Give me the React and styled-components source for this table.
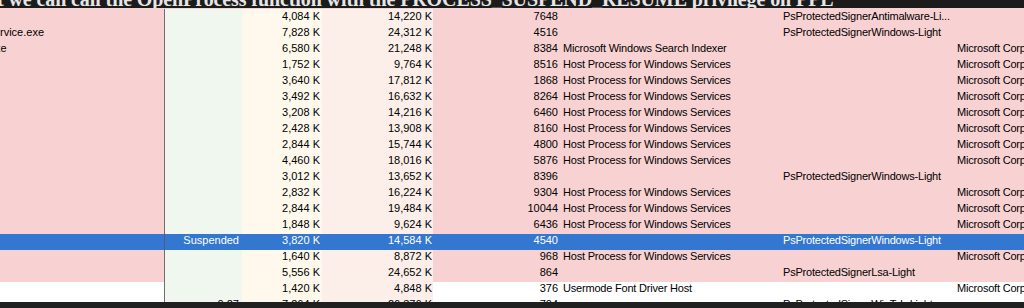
import React from "react";
import styled, { createGlobalStyle, css } from "styled-components";

const GlobalStyle = createGlobalStyle`
    html, body {
        margin: 0;
        padding: 0;
        background: #ffffff;
    }
    body {
        width: 1024px;
        height: 308px;
        overflow: hidden;
        font-family: "Liberation Sans", Arial, sans-serif;
    }
`;

const rows = [
    { name: "MsMpEng.exe", priv: "4,084 K", ws: "14,220 K", pid: "7648", prot: "PsProtectedSignerAntimalware-Li..." },
    { name: "SecurityHealthService.exe", priv: "7,828 K", ws: "24,312 K", pid: "4516", prot: "PsProtectedSignerWindows-Light" },
    { name: "SearchIndexer.exe", priv: "6,580 K", ws: "21,248 K", pid: "8384", desc: "Microsoft Windows Search Indexer", company: "Microsoft Corporation" },
    { name: "svchost.exe", priv: "1,752 K", ws: "9,764 K", pid: "8516", desc: "Host Process for Windows Services", company: "Microsoft Corporation" },
    { name: "svchost.exe", priv: "3,640 K", ws: "17,812 K", pid: "1868", desc: "Host Process for Windows Services", company: "Microsoft Corporation" },
    { name: "svchost.exe", priv: "3,492 K", ws: "16,632 K", pid: "8264", desc: "Host Process for Windows Services", company: "Microsoft Corporation" },
    { name: "svchost.exe", priv: "3,208 K", ws: "14,216 K", pid: "6460", desc: "Host Process for Windows Services", company: "Microsoft Corporation" },
    { name: "svchost.exe", priv: "2,428 K", ws: "13,908 K", pid: "8160", desc: "Host Process for Windows Services", company: "Microsoft Corporation" },
    { name: "svchost.exe", priv: "2,844 K", ws: "15,744 K", pid: "4800", desc: "Host Process for Windows Services", company: "Microsoft Corporation" },
    { name: "svchost.exe", priv: "4,460 K", ws: "18,016 K", pid: "5876", desc: "Host Process for Windows Services", company: "Microsoft Corporation" },
    { name: "svchost.exe", priv: "3,012 K", ws: "13,652 K", pid: "8396", prot: "PsProtectedSignerWindows-Light" },
    { name: "svchost.exe", priv: "2,832 K", ws: "16,224 K", pid: "9304", desc: "Host Process for Windows Services", company: "Microsoft Corporation" },
    { name: "svchost.exe", priv: "2,844 K", ws: "19,484 K", pid: "10044", desc: "Host Process for Windows Services", company: "Microsoft Corporation" },
    { name: "svchost.exe", priv: "1,848 K", ws: "9,624 K", pid: "6436", desc: "Host Process for Windows Services", company: "Microsoft Corporation" },
    { name: "sgrmbroker.exe", cpu: "Suspended", priv: "3,820 K", ws: "14,584 K", pid: "4540", prot: "PsProtectedSignerWindows-Light", tone: "selected" },
    { name: "svchost.exe", priv: "1,640 K", ws: "8,872 K", pid: "968", desc: "Host Process for Windows Services", company: "Microsoft Corporation" },
    { name: "lsass.exe", priv: "5,556 K", ws: "24,652 K", pid: "864", prot: "PsProtectedSignerLsa-Light" },
    { name: "fontdrvhost.exe", priv: "1,420 K", ws: "4,848 K", pid: "376", desc: "Usermode Font Driver Host", company: "Microsoft Corporation", tone: "plain" },
    { name: "csrss.exe", cpu: "0.27", priv: "7,264 K", ws: "26,376 K", pid: "704", prot: "PsProtectedSignerWinTcb-Light", tone: "plain" },
];

const Page = styled.div`
    display: flex;
    flex-direction: column;
    width: 1024px;
    height: 308px;
    overflow: hidden;
`;

const Caption = styled.div`
    flex: 0 0 8px;
    overflow: hidden;
    background: #1b1b1b;
    color: #e6e6e6;
    font-family: "Liberation Serif", "Times New Roman", serif;
    font-weight: 700;
    font-size: 20px;
    line-height: 20px;
    white-space: nowrap;
`;

const CaptionText = styled.div`
    margin-top: -11px;
    margin-left: -3px;
    letter-spacing: -0.1px;
`;

const Table = styled.div`
    flex: 1;
    overflow: hidden;
    display: flex;
    flex-direction: column;
    font-size: 11px;
    color: #000;
`;

const toneBg = {
    service: "#f8d2d2",
    plain: "#ffffff",
    selected: "#3377d1",
};

const Row = styled.div`
    flex: 0 0 auto;
    display: grid;
    grid-template-columns: 164px 1px 77px 80px 111px 127px 220px 173px 71px;
    height: 16px;
    background: ${(p) => toneBg[p.$tone]};
    color: ${(p) => (p.$tone === "selected" ? "#ffffff" : "#000000")};

    &:first-child {
        height: 17px;
        padding-top: 1px;
    }
`;

const Cell = styled.div`
    display: flex;
    align-items: center;
    overflow: hidden;
    white-space: nowrap;
    line-height: 12px;
    padding-bottom: 4px;
`;

const NameCell = styled(Cell)`
    span {
        margin-left: -85px;
    }
`;

const Divider = styled.div`
    background: ${(p) => (p.$selected ? "#4a5f78" : "#6f6f6f")};
`;

const heat = {
    cpu: "#eff7ee",
    priv: "#fef9ec",
    ws: "#fcefe9",
};

const NumCell = styled(Cell)`
    justify-content: flex-end;
    padding-right: ${(p) => p.$pad}px;
    ${(p) =>
        !p.$selected &&
        css`
            background: ${heat[p.$kind]};
        `}
`;

const TextCell = styled(Cell)`
    padding-left: ${(p) => p.$pad}px;
    letter-spacing: -0.2px;
`;

const BottomBar = styled.div`
    flex: 0 0 6px;
    background: #202020;
`;

const App = () => (
    <>
        <GlobalStyle />
        <Page>
            <Caption>
                <CaptionText>
                    t we can call the OpenProcess function with the PROCESS_SUSPEND_RESUME privilege on PPL
                </CaptionText>
            </Caption>
            <Table>
                {rows.map((r, i) => {
                    const tone = r.tone || "service";
                    const sel = tone === "selected";
                    return (
                        <Row key={i} $tone={tone}>
                            <NameCell>
                                <span>{r.name}</span>
                            </NameCell>
                            <Divider $selected={sel} />
                            <NumCell $kind="cpu" $pad={3} $selected={sel}>
                                {r.cpu}
                            </NumCell>
                            <NumCell $kind="priv" $pad={2} $selected={sel}>
                                {r.priv}
                            </NumCell>
                            <NumCell $kind="ws" $pad={1} $selected={sel}>
                                {r.ws}
                            </NumCell>
                            <NumCell $kind="pid" $pad={2} $selected>
                                {r.pid}
                            </NumCell>
                            <TextCell $pad={3}>{r.desc}</TextCell>
                            <TextCell $pad={3}>{r.prot}</TextCell>
                            <TextCell $pad={4}>{r.company}</TextCell>
                        </Row>
                    );
                })}
            </Table>
            <BottomBar />
        </Page>
    </>
);

export default App;
